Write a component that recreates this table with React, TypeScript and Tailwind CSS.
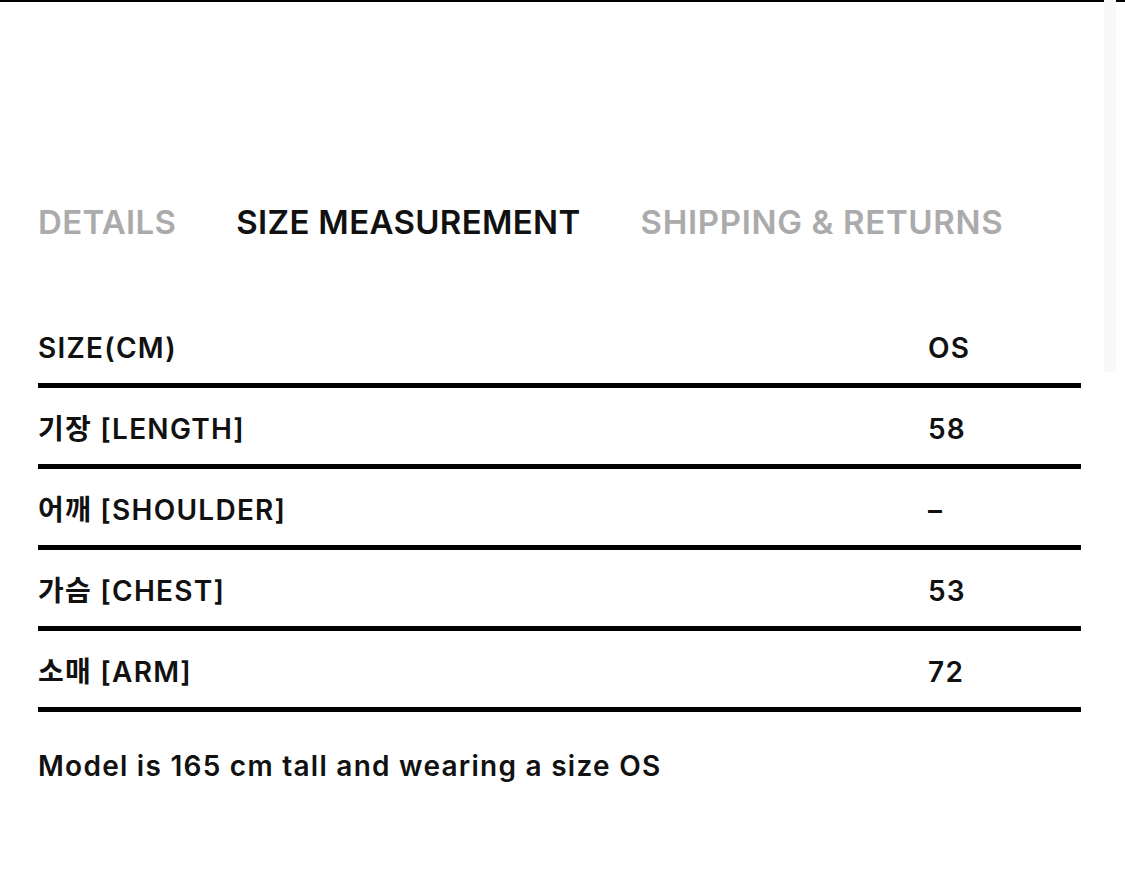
const rows = [
  { label: "기장 [LENGTH]", value: "58" },
  { label: "어깨 [SHOULDER]", value: "–" },
  { label: "가슴 [CHEST]", value: "53" },
  { label: "소매 [ARM]", value: "72" },
];

const font = {
  fontFamily: '"Inter", "Noto Sans CJK KR", sans-serif',
};

export default function App() {
  return (
    <div className="relative h-[894px] w-[1125px] overflow-hidden bg-white" style={font}>
      <div className="h-[2px] w-full bg-black" />
      <div className="absolute right-[9px] top-0 h-[372px] w-[12px] bg-[#f9f9f9]" />
      <div className="pl-[38px] pr-[44px]">
        <div className="flex items-center gap-[60px] pt-[198px] text-[33px] font-semibold leading-[44px] tracking-[0.01em]">
          <span className="text-[#ababab]">DETAILS</span>
          <span className="text-[#111]">SIZE MEASUREMENT</span>
          <span className="tracking-[0.02em] text-[#ababab]">SHIPPING &amp; RETURNS</span>
        </div>

        <div className="mt-[64px] text-[28px] font-semibold tracking-[0.045em] text-[#111]">
          <div className="flex h-[80px] items-center border-b-[5px] border-black pt-[4px]">
            <span className="flex-1">SIZE(CM)</span>
            <span className="w-[153px]">OS</span>
          </div>
          {rows.map((r) => (
            <div key={r.label} className="flex h-[81px] items-center border-b-[5px] border-black pt-[6px]">
              <span className="flex-1">{r.label}</span>
              <span className="w-[153px]">{r.value}</span>
            </div>
          ))}
        </div>

        <p className="mt-[36px] text-[28px] font-semibold leading-[36px] tracking-[0.045em] text-[#111]">
          Model is 165 cm tall and wearing a size OS
        </p>
      </div>
    </div>
  );
}
